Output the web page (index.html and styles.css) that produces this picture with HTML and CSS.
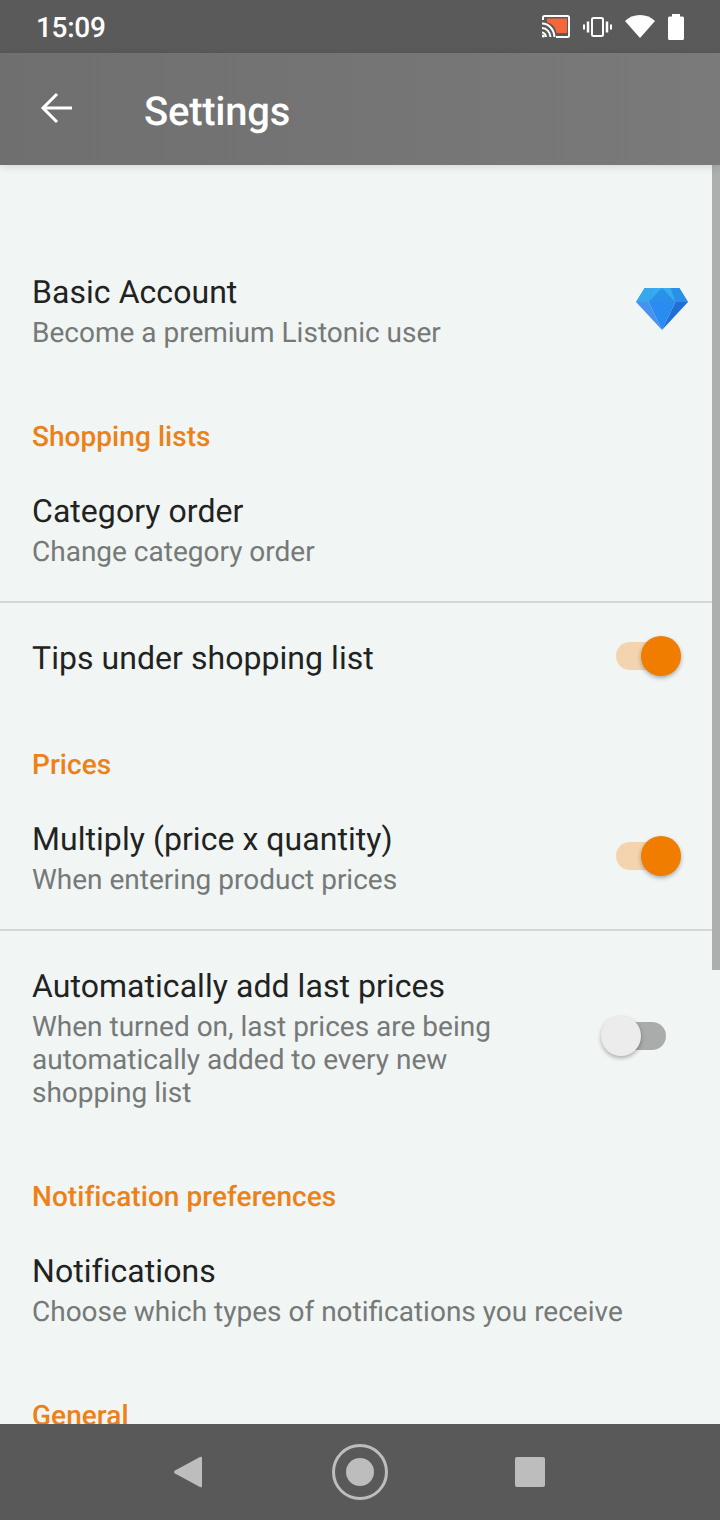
FILE: index.html
```html
<!DOCTYPE html>
<html lang="en">
<head>
  <meta charset="UTF-8" />
  <title>Settings</title>
  <link rel="stylesheet" href="styles.css">
</head>
<body>
  <div class="page">
    <div class="status-bar">
      <span class="clock">15:09</span>
      <div class="status-icons">
        <svg class="icon-cast" width="28" height="23" viewBox="0 0 28 23">
          <path d="M5 3.500h20v14.500H14.500C13.500 12 10.500 8.500 5 7.500z" fill="#f4673a"/>
          <path d="M1 5V2.500Q1 1 2.500 1h23Q27 1 27 2.500v18q0 1.500-1.500 1.500H14" fill="none" stroke="#fff" stroke-width="2"/>
          <path d="M0 8.500c6.500 0 12 5.500 12.500 13.500M0 13c4.500 0 8 4 8.500 9M0 17.500c2 0 4 2 4 4.500" fill="none" stroke="#fff" stroke-width="2"/>
          <circle cx="1.300" cy="21" r="1.500" fill="#fff"/>
        </svg>
        <svg class="icon-vibrate" width="29" height="20" viewBox="0 0 29 20" fill="none" stroke="#fff">
          <rect x="9" y="1" width="11" height="18" rx="1.500" stroke-width="2"/>
          <path d="M5 4.500v11M24 4.500v11" stroke-width="2.500"/>
          <path d="M1 7.500v5M28 7.500v5" stroke-width="2"/>
        </svg>
        <svg class="icon-wifi" width="30" height="23" viewBox="0 0 30 23">
          <path d="M0 6Q6 0 15 0t15 6L15 23z" fill="#fff"/>
        </svg>
        <svg class="icon-battery" width="16" height="26" viewBox="0 0 16 26">
          <path d="M4 0h8v2.500h2.500q1.500 0 1.500 1.500v20.500q0 1.500-1.500 1.500h-13Q0 26 0 24.500V4q0-1.500 1.500-1.500H4z" fill="#fff"/>
        </svg>
      </div>
    </div>

    <div class="toolbar">
      <svg class="back-arrow" width="32" height="32" viewBox="0 0 32 32" fill="none" stroke="#fff" stroke-width="3">
        <path d="M32 16H3M17 2L3 16l14 14"/>
      </svg>
      <h1 class="toolbar-title">Settings</h1>
    </div>

    <div class="content">
      <div class="scrollbar"></div>
      <div class="settings">
        <div class="row first-row">
          <div class="row-text">
            <div class="row-title">Basic Account</div>
            <div class="row-sub">Become a premium Listonic user</div>
          </div>
          <svg class="diamond" width="52" height="42" viewBox="0 0 54 42" preserveAspectRatio="none">
            <path d="M9 0h36l9 14H0z" fill="#2f9ae8"/>
            <path d="M9 0h9l-5 14H0z" fill="#35a9ec"/>
            <path d="M18 0L13 14h28L36 0l-9 0z" fill="#2a91ea"/>
            <path d="M18 0h9L13 14z" fill="#37abee"/>
            <path d="M27 0h9l5 14z" fill="#38adee"/>
            <path d="M36 0h9l9 14H41z" fill="#2890e8"/>
            <path d="M0 14h13l14 28z" fill="#4792f0"/>
            <path d="M13 14h28L27 42z" fill="#2a8cf0"/>
            <path d="M41 14h13L27 42z" fill="#1f6fd6"/>
          </svg>
        </div>

        <h2 class="section">Shopping lists</h2>
        <div class="row">
          <div class="row-text">
            <div class="row-title">Category order</div>
            <div class="row-sub">Change category order</div>
          </div>
        </div>
        <hr class="divider">
        <div class="row">
          <div class="row-text">
            <div class="row-title">Tips under shopping list</div>
          </div>
          <div class="switch on"><span class="knob"></span></div>
        </div>

        <h2 class="section">Prices</h2>
        <div class="row">
          <div class="row-text">
            <div class="row-title">Multiply (price x quantity)</div>
            <div class="row-sub">When entering product prices</div>
          </div>
          <div class="switch on"><span class="knob"></span></div>
        </div>
        <hr class="divider">
        <div class="row">
          <div class="row-text">
            <div class="row-title">Automatically add last prices</div>
            <div class="row-sub">When turned on, last prices are being automatically added to every new shopping list</div>
          </div>
          <div class="switch"><span class="knob"></span></div>
        </div>

        <h2 class="section">Notification preferences</h2>
        <div class="row">
          <div class="row-text">
            <div class="row-title">Notifications</div>
            <div class="row-sub">Choose which types of notifications you receive</div>
          </div>
        </div>

        <h2 class="section">General</h2>
      </div>
    </div>

    <div class="nav-bar">
      <svg width="28" height="32" viewBox="0 0 28 32">
        <path d="M26 1L1 14.500q-2 1.500 0 3L26 31q2 1 2-1V2q0-2-2-1z" fill="#bdbdbd"/>
      </svg>
      <svg class="nav-home" width="56" height="56" viewBox="0 0 56 56">
        <circle cx="28" cy="28" r="26.500" fill="none" stroke="#bdbdbd" stroke-width="3"/>
        <circle cx="28" cy="28" r="14" fill="#bdbdbd"/>
      </svg>
      <div class="nav-square"></div>
    </div>
  </div>
</body>
</html>
```

FILE: styles.css
```css
* {
  box-sizing: border-box;
}

body {
  margin: 0;
  font-family: Roboto, 'Liberation Sans', sans-serif;
  background: #f1f5f4;
  text-rendering: geometricPrecision;
}

.page {
  width: 720px;
  height: 1520px;
  display: flex;
  flex-direction: column;
  overflow: hidden;
}

.status-bar {
  height: 53px;
  flex: none;
  background: #5a5a5a;
  color: #fff;
  display: flex;
  align-items: center;
  justify-content: space-between;
  padding: 0 36px;
}

.clock {
  font-size: 28px;
  font-weight: 500;
  letter-spacing: -0.3px;
  margin-top: 2px;
}

.status-icons {
  display: flex;
  align-items: center;
  gap: 13px;
}

.toolbar {
  height: 112px;
  flex: none;
  background: linear-gradient(to right, #6f6f6f, #7a7a7a);
  display: flex;
  align-items: center;
  padding-left: 40px;
  position: relative;
  z-index: 1;
  box-shadow: 0 2px 8px rgba(0,0,0,0.12);
}

.back-arrow {
  margin-top: -2px;
}

.toolbar-title {
  margin: 4px 0 0 72px;
  color: #fff;
  font-size: 40px;
  font-weight: 500;
  letter-spacing: -0.25px;
}

.content {
  flex: 1;
  min-height: 0;
  position: relative;
  overflow: hidden;
}

.scrollbar {
  position: absolute;
  top: 0;
  right: 0;
  width: 8px;
  height: 805px;
  background: #acafae;
}

.settings {
  padding-top: 72px;
}

.row {
  display: flex;
  align-items: center;
  padding: 35px 54px 32px 32px;
}

.first-row {
  padding-right: 32px;
}

.diamond {
  margin-top: -4px;
}

.row-text {
  flex: 1;
  min-width: 0;
}

.row-title {
  font-size: 32px;
  line-height: 40px;
  letter-spacing: 0.05px;
  color: #1f2321;
}

.row-sub {
  margin: 4px 0 1px;
  font-size: 28px;
  line-height: 33px;
  color: #757978;
}

.section {
  margin: 35px 32px 0;
  height: 39px;
  font-size: 28px;
  line-height: 40px;
  font-weight: 500;
  letter-spacing: 0.05px;
  color: #ec8118;
}

.divider {
  margin: 0;
  border: none;
  height: 2px;
  background: #d3d8d6;
}

.switch {
  flex: none;
  width: 50px;
  height: 28px;
  margin: -4px 0 0 100px;
  border-radius: 14px;
  background: #a9acab;
  position: relative;
}

.switch.on {
  background: #f4d4ae;
}

.knob {
  position: absolute;
  top: -6px;
  left: -15px;
  width: 40px;
  height: 40px;
  border-radius: 50%;
  background: #ececec;
  box-shadow: 0 2px 4px rgba(0,0,0,0.3);
}

.switch.on .knob {
  left: 25px;
  background: #f07c00;
}

.nav-bar {
  height: 96px;
  flex: none;
  background: #595959;
  display: flex;
  align-items: center;
  padding-left: 174px;
  position: relative;
}

.nav-home {
  margin-left: 130px;
}

.nav-square {
  width: 30px;
  height: 30px;
  margin-left: 127px;
  border-radius: 2px;
  background: #bdbdbd;
}
```
